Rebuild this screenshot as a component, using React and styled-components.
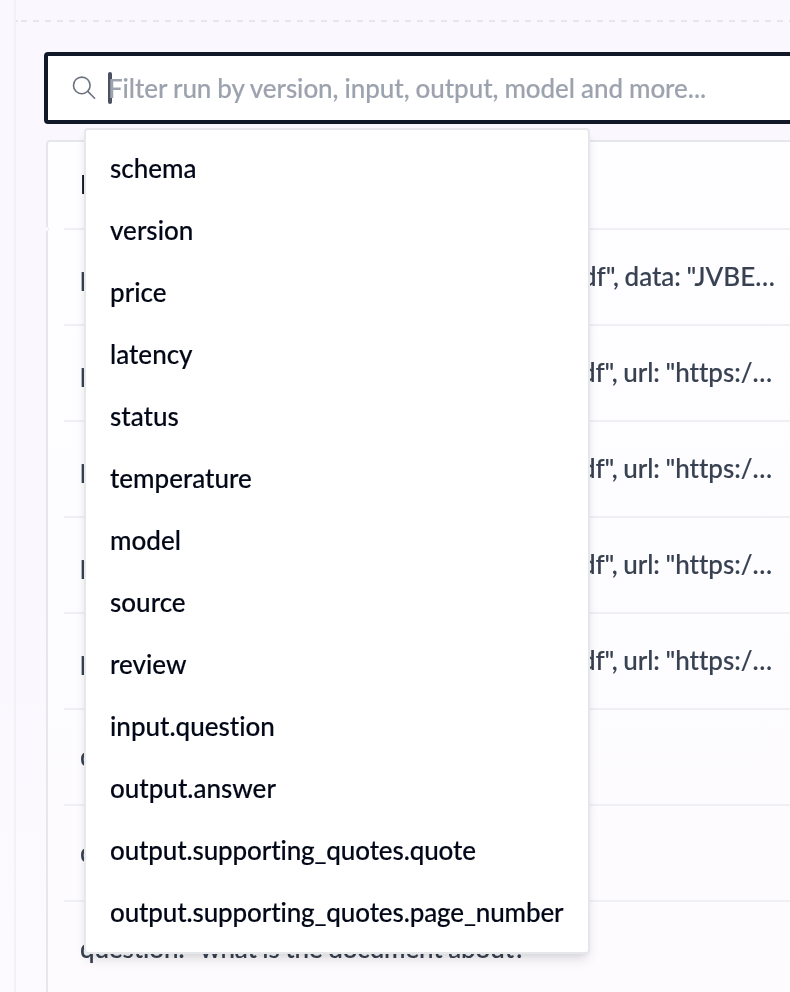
import React from "react";
import styled, { createGlobalStyle } from "styled-components";

const GlobalStyle = createGlobalStyle`
  * { box-sizing: border-box; }
  body {
    margin: 0;
    overflow: hidden;
    font-family: "Lato", sans-serif;
    font-size: 26px;
    font-weight: 500;
    font-variant-ligatures: none;
    word-spacing: -0.9px;
    -webkit-font-smoothing: antialiased;
    -webkit-text-stroke: 0.15px currentColor;
  }
`;

const Page = styled.div`
  display: flex;
  width: 790px;
  height: 992px;
  overflow: hidden;
  will-change: transform;
  background: linear-gradient(180deg, #faf8fe 0%, #faf8fe 60%, #fcfaff 100%);
`;

const Rail = styled.div`
  flex: 0 0 16px;
  border-right: 2px solid #f1f2f6;
`;

const Main = styled.main`
  flex: 1;
  min-width: 0;
  display: flex;
  flex-direction: column;
`;

const DashedRule = styled.div`
  flex: none;
  height: 2px;
  margin-top: 20px;
  background:
    linear-gradient(#e5e7eb, #e5e7eb) 0 0 / 2px 2px no-repeat,
    linear-gradient(90deg, #e5e7eb 6px, transparent 6px) 5px 0 / 12px 2px repeat-x;
`;

const SearchArea = styled.div`
  flex: none;
  position: relative;
  z-index: 1;
  margin: 30px 0 0 28px;
`;

const SearchField = styled.div`
  display: flex;
  align-items: center;
  width: 900px;
  height: 72px;
  padding-left: 24px;
  border: 4px solid #111827;
  border-radius: 4px;
  background: #fff;
`;

const SearchIcon = styled.svg`
  flex: none;
  width: 26px;
  height: 26px;
  fill: none;
  stroke: #6b7280;
  stroke-width: 1.6;
  stroke-linecap: round;
`;

const Caret = styled.span`
  width: 4px;
  height: 32px;
  margin: 0 -4px 0 10px;
  border-radius: 2px;
  background: #4b5160;
`;

const Placeholder = styled.span`
  color: #9ca3af;
  white-space: nowrap;
  letter-spacing: -0.06px;
  word-spacing: -0.5px;
`;

const Menu = styled.ul`
  position: absolute;
  top: 76px;
  left: 40px;
  width: 506px;
  margin: 0;
  padding: 8px 0;
  list-style: none;
  border: 2px solid #e5e7eb;
  border-radius: 4px;
  background: #fff;
  box-shadow: 0 8px 12px -2px rgba(0, 0, 0, 0.1), 0 4px 8px -4px rgba(0, 0, 0, 0.1);
`;

const MenuItem = styled.li`
  height: 62px;
  padding-left: 24px;
  line-height: 61px;
  color: #020817;
  white-space: nowrap;
  letter-spacing: ${(p) => (p.$tight ? "-0.13px" : "0")};
`;

const Table = styled.section`
  flex: none;
  position: relative;
  width: 900px;
  height: 900px;
  margin: 16px 0 0 30px;
  border: 2px solid #e5e7eb;
  border-radius: 4px;
  background: linear-gradient(180deg, #fefdff 0%, #fdfcfe 50%, #fdfbfd 100%);
`;

const Notch = styled.span`
  position: absolute;
  left: -3px;
  top: 85px;
  width: 4px;
  height: 4px;
  background: #faf8fe;
  border-right: 1px solid #eceef1;
  border-radius: 0 2px 2px 0;
`;

const Row = styled.div`
  display: flex;
  align-items: center;
  height: ${(p) => (p.$head ? 88 : 96)}px;
  margin-left: 16px;
  padding: 0 0 2px 16px;
  border-bottom: 2px solid #eff0f3;
  font-weight: ${(p) => (p.$head ? 700 : 500)};
  color: ${(p) => (p.$head ? "#111827" : "#374151")};
  white-space: nowrap;
`;

const Key = styled.span`
  flex: 0 0 ${(p) => (p.$wide ? "auto" : "178px")};
  letter-spacing: ${(p) => (p.$wide ? "-0.12px" : "0")};
`;

const Value = styled.span`
  letter-spacing: ${(p) => (p.$tight ? "-0.04px" : "0")};
`;

const FIELDS = [
  "schema", "version", "price", "latency", "status", "temperature", "model",
  "source", "review", "input.question", "output.answer",
  "output.supporting_quotes.quote", "output.supporting_quotes.page_number",
];

const URL_VALUE = 'content_type: "application/pdf", url: "https:/…';
const DOCUMENTS = [
  'content_type: "application/pdf", data: "JVBE…',
  URL_VALUE, URL_VALUE, URL_VALUE, URL_VALUE,
];
const QUESTION = 'question: "what is the document about?"';
const QUESTIONS = [QUESTION, QUESTION, QUESTION];

export default function App() {
  return (
    <Page>
      <GlobalStyle />
      <Rail />
      <Main>
        <DashedRule />
        <SearchArea>
          <SearchField>
            <SearchIcon viewBox="0 0 26 26">
              <circle cx="9.8" cy="10.4" r="8.3" />
              <path d="M15.8 16.4 L22.6 23.2" />
            </SearchIcon>
            <Caret />
            <Placeholder>Filter run by version, input, output, model and more...</Placeholder>
          </SearchField>
          <Menu>
            {FIELDS.map((name) => (
              <MenuItem key={name} $tight={name.includes("_")}>{name}</MenuItem>
            ))}
          </Menu>
        </SearchArea>
        <Table>
          <Row $head>Input</Row>
          <Notch />
          {DOCUMENTS.map((value, i) => (
            <Row key={i}>
              <Key>pdf:</Key>
              <Value $tight={value === URL_VALUE}>{value}</Value>
            </Row>
          ))}
          {QUESTIONS.map((value, i) => (
            <Row key={i}><Key $wide>{value}</Key></Row>
          ))}
        </Table>
      </Main>
    </Page>
  );
}
